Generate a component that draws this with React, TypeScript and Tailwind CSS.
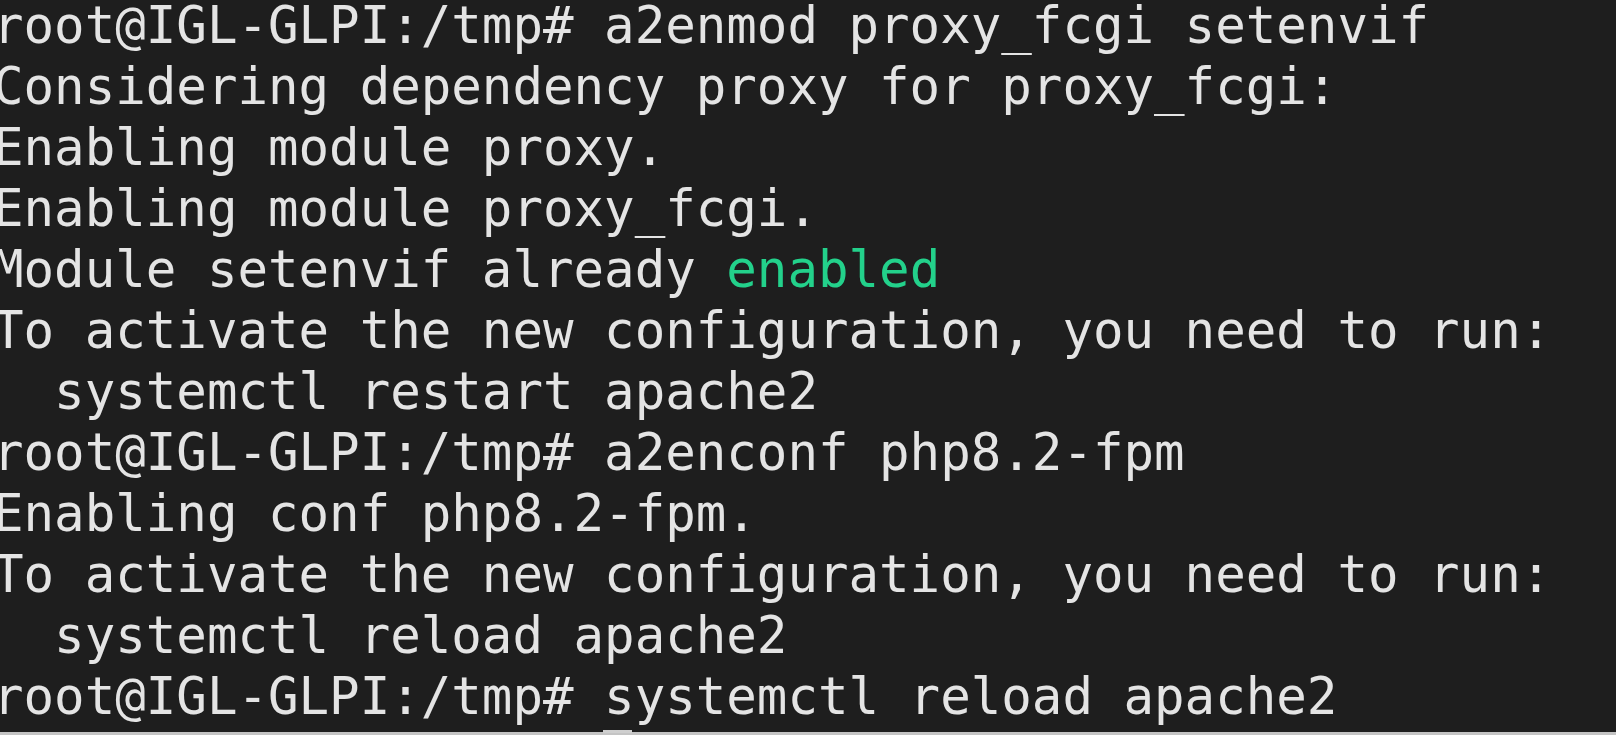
const lines: { text: string; green?: string }[] = [
  { text: "root@IGL-GLPI:/tmp# a2enmod proxy_fcgi setenvif" },
  { text: "Considering dependency proxy for proxy_fcgi:" },
  { text: "Enabling module proxy." },
  { text: "Enabling module proxy_fcgi." },
  { text: "Module setenvif already ", green: "enabled" },
  { text: "To activate the new configuration, you need to run:" },
  { text: "  systemctl restart apache2" },
  { text: "root@IGL-GLPI:/tmp# a2enconf php8.2-fpm" },
  { text: "Enabling conf php8.2-fpm." },
  { text: "To activate the new configuration, you need to run:" },
  { text: "  systemctl reload apache2" },
  { text: "root@IGL-GLPI:/tmp# systemctl reload apache2" },
];

const Terminal = () => {
  return (
    <div className="relative flex h-[735px] w-full flex-col overflow-hidden bg-[#1e1e1e]">
      <pre className="-ml-[7px] -mt-[5px] flex-1 whitespace-pre font-['DejaVu_Sans_Mono',monospace] text-[50.75px] leading-[61px] text-[#e4e4e4]">
        {lines.map((line, i) => (
          <div key={i}>
            {line.text}
            {line.green && <span className="text-[#23d18b]">{line.green}</span>}
          </div>
        ))}
      </pre>
      {/* cursor */}
      <div className="absolute left-[603px] top-[730px] h-[3px] w-[29px] bg-[#cfcfcf]" />
      <div className="h-[3px] w-full bg-[#c4c4c4]" />
    </div>
  );
};

export default function App() {
  return <Terminal />;
}
